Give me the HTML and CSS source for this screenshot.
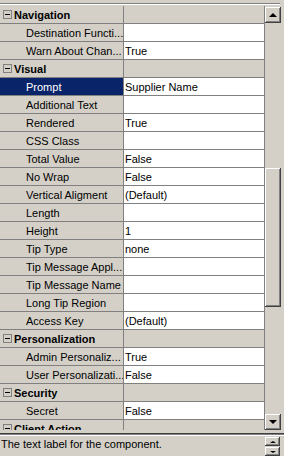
FILE: index.html
```
<!doctype html>
<html lang="en">
    <head>
        <meta charset="UTF-8" />
        <meta name="viewport" content="width=device-width, initial-scale=1.0" />
        <title>Properties</title>
        <link rel="stylesheet" href="styles.css">
    </head>

    <body>
        <div id="sheet">
            <div class="topframe"></div>
            <div class="body">
                <div class="grid">
                    <div class="row cat"><div class="name"><span class="tog"></span>Navigation</div><div class="val"></div></div>
                    <div class="row"><div class="name">Destination Functi...</div><div class="val"></div></div>
                    <div class="row"><div class="name">Warn About Chan...</div><div class="val">True</div></div>
                    <div class="row cat"><div class="name"><span class="tog"></span>Visual</div><div class="val"></div></div>
                    <div class="row sel"><div class="name">Prompt</div><div class="val">Supplier Name</div></div>
                    <div class="row"><div class="name">Additional Text</div><div class="val"></div></div>
                    <div class="row"><div class="name">Rendered</div><div class="val">True</div></div>
                    <div class="row"><div class="name">CSS Class</div><div class="val"></div></div>
                    <div class="row"><div class="name">Total Value</div><div class="val">False</div></div>
                    <div class="row"><div class="name">No Wrap</div><div class="val">False</div></div>
                    <div class="row"><div class="name">Vertical Aligment</div><div class="val">(Default)</div></div>
                    <div class="row"><div class="name">Length</div><div class="val"></div></div>
                    <div class="row"><div class="name">Height</div><div class="val">1</div></div>
                    <div class="row"><div class="name">Tip Type</div><div class="val">none</div></div>
                    <div class="row"><div class="name">Tip Message Appl...</div><div class="val"></div></div>
                    <div class="row"><div class="name">Tip Message Name</div><div class="val"></div></div>
                    <div class="row"><div class="name">Long Tip Region</div><div class="val"></div></div>
                    <div class="row"><div class="name">Access Key</div><div class="val">(Default)</div></div>
                    <div class="row cat"><div class="name"><span class="tog"></span>Personalization</div><div class="val"></div></div>
                    <div class="row"><div class="name">Admin Personaliz...</div><div class="val">True</div></div>
                    <div class="row"><div class="name">User Personalizati...</div><div class="val">False</div></div>
                    <div class="row cat"><div class="name"><span class="tog"></span>Security</div><div class="val"></div></div>
                    <div class="row"><div class="name">Secret</div><div class="val">False</div></div>
                    <div class="row cat"><div class="name"><span class="tog"></span>Client Action</div><div class="val"></div></div>
                </div>
                <div class="vscroll">
                    <div class="sbtn"><span class="arr up"></span></div>
                    <div class="track"><div class="thumb"></div></div>
                    <div class="sbtn"><span class="arr down"></span></div>
                </div>
            </div>
            <div class="sep"></div>
            <div class="desc">
                <div class="desc-text">The text label for the component.</div>
                <div class="mini">
                    <div class="mbtn"><span class="arr up small"></span></div>
                    <div class="mbtn"><span class="arr down small"></span></div>
                </div>
            </div>
        </div>
    </body>
</html>
```

FILE: styles.css
```
body {
    margin: 0;
    background: #d4d0c8;
    font-family: "Liberation Sans", Arial, sans-serif;
    font-size: 11px;
    color: black;
}

#sheet {
    width: 284px;
    height: 456px;
    overflow: hidden;
    display: flex;
    flex-direction: column;
}

.topframe {
    height: 8px;
    box-sizing: border-box;
    margin-right: 4px;
    border-bottom: solid 1px #d4d0c8;
    background: linear-gradient(#d4d0c8 0 3px, #808080 3px 4px, #fff 4px 5px, #d4d0c8 5px 6px, #404040 6px 7px);
}

.body {
    display: flex;
    height: 424px;
    padding-right: 3px;
}

.grid {
    width: 264px;
    border-right: solid 1px #808080;
    overflow: hidden;
}

.row {
    display: flex;
    height: 17px;
    border-bottom: solid 1px #808080;
    line-height: 15px;
}

.name,
.val {
    height: 17px;
    box-sizing: border-box;
    padding-top: 2px;
    white-space: nowrap;
    overflow: hidden;
}

.name {
    width: 124px;
    flex: none;
    padding-left: 26px;
    border-right: solid 1px #808080;
    background: #d4d0c8;
}

.val {
    flex: 1;
    padding-left: 1px;
    background: white;
}

.cat .name {
    padding-left: 3px;
    font-weight: bold;
    display: flex;
}

.cat .val {
    background: #d4d0c8;
}

.sel .name {
    background: #0a246a;
    color: white;
}

.tog {
    width: 9px;
    height: 9px;
    box-sizing: border-box;
    border: solid 1px #808080;
    margin: 2px 2px 0 0;
    position: relative;
    flex: none;
}

.tog::after {
    content: "";
    position: absolute;
    left: 1px;
    top: 3px;
    width: 5px;
    height: 1px;
    background: black;
}

.vscroll {
    width: 16px;
    display: flex;
    flex-direction: column;
}

.sbtn,
.thumb,
.mbtn {
    background: #d4d0c8;
    box-shadow: inset -1px -1px #404040, inset 1px 1px #fff, inset -2px -2px #808080;
    display: flex;
    align-items: center;
    justify-content: center;
}

.sbtn {
    height: 16px;
    margin-top: 1px;
}

.track {
    flex: 1;
    background: #d4d0c8;
}

.thumb {
    margin-top: 145px;
    height: 139px;
}

.arr {
    width: 0;
    height: 0;
    border-left: solid 4px transparent;
    border-right: solid 4px transparent;
}

.arr.up {
    border-bottom: solid 4px black;
}

.arr.down {
    border-top: solid 4px black;
}

.arr.small {
    border-left-width: 3px;
    border-right-width: 3px;
}

.arr.small.up {
    border-bottom-width: 2px;
}

.arr.small.down {
    border-top-width: 2px;
}

.sep {
    height: 8px;
    background: linear-gradient(#d4d0c8 0 3px, #404040 3px 4px, #808080 4px 5px, #fff 5px 6px, #d4d0c8 6px 8px);
}

.desc {
    flex: 1;
    display: flex;
    padding-right: 4px;
}

.desc-text {
    flex: 1;
    padding-left: 1px;
    line-height: 16px;
    white-space: nowrap;
}

.mini {
    width: 15px;
    margin-top: 1px;
    display: flex;
    flex-direction: column;
    gap: 1px;
}

.mbtn {
    height: 9px;
}
```
